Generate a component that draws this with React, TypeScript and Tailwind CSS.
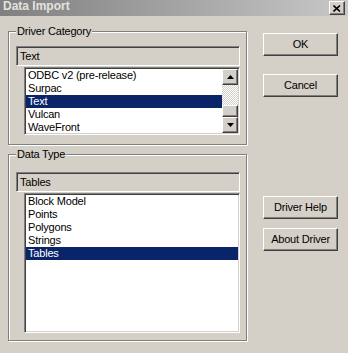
const raised =
  "border border-t-white border-l-white border-b-[#404040] border-r-[#404040] shadow-[inset_-1px_-1px_0_#808080]"
const sunken =
  "border border-t-[#808080] border-l-[#808080] border-b-white border-r-white shadow-[inset_1px_1px_0_#404040,inset_-1px_-1px_0_#d4d0c8]"

function Group({ label, children, className }: { label: string; children: React.ReactNode; className: string }) {
  return (
    <div className={`relative border border-[#808080] shadow-[inset_1px_1px_0_#fff,1px_1px_0_#fff] pl-[7px] ${className}`}>
      <span className="absolute left-[7px] -top-[8px] bg-[#d4d0c8] px-[1px] leading-[14px]">{label}</span>
      {children}
    </div>
  )
}

function ReadOnly({ value }: { value: string }) {
  return (
    <div className={`w-[224px] h-[20px] bg-[#d4d0c8] pl-[3px] pt-[3px] leading-[13px] ${sunken}`}>{value}</div>
  )
}

function Arrow({ up }: { up?: boolean }) {
  return (
    <svg width="7" height="4" viewBox="0 0 7 4">
      <path d={up ? "M3.5 0 L7 4 L0 4 Z" : "M0 0 L7 0 L3.5 4 Z"} fill="#000" />
    </svg>
  )
}

function ListBox({ items, selected, height, scroll }: { items: string[]; selected: string; height: string; scroll?: boolean }) {
  return (
    <div className={`ml-[8px] mt-[1px] w-[216px] ${height} bg-white flex ${sunken} p-[1px]`}>
      <div className="flex-1 flex flex-col">
        {items.map(item => (
          <div key={item}
            className={`h-[13px] leading-[13px] pl-[2px] whitespace-nowrap ${item === selected ? "bg-[#0a246a] text-white" : "text-black"}`}>
            {item}
          </div>
        ))}
      </div>
      {scroll && (
        <div className="w-[16px] flex flex-col">
          <div className={`h-[16px] flex items-center justify-center bg-[#d4d0c8] ${raised}`}><Arrow up /></div>
          <div className="h-[20px] bg-[repeating-conic-gradient(#fff_0_25%,#d4d0c8_0_50%)] bg-[length:2px_2px]" />
          <div className={`h-[12px] bg-[#d4d0c8] ${raised}`} />
          <div className={`h-[16px] flex items-center justify-center bg-[#d4d0c8] ${raised}`}><Arrow /></div>
        </div>
      )}
    </div>
  )
}

function Button({ label, className }: { label: string; className: string }) {
  return (
    <div className={`w-[75px] h-[23px] flex items-center justify-center bg-[#d4d0c8] ${raised} ${className}`}>
      {label}
    </div>
  )
}

export default function App() {
  return (
    <div className="w-[348px] h-[353px] bg-[#d4d0c8] flex flex-col text-[11px] text-black font-['Liberation_Sans',Arial,sans-serif] tracking-[-0.2px] overflow-hidden">
      <div className="h-[16px] bg-gradient-to-r from-[#808080] to-[#c8c8c8] flex items-start justify-between pl-[3px] pr-[3px]">
        <span className="text-[12px] font-bold text-[#e4e2dc] leading-[13px] tracking-normal">Data Import</span>
        <div className={`w-[16px] h-[14px] mt-[1px] bg-[#d4d0c8] flex items-center justify-center ${raised}`}>
          <svg width="8" height="7" viewBox="0 0 8 7">
            <path d="M0.5 0.5 L7 6.5 M7 0.5 L0.5 6.5" stroke="#000" strokeWidth="1.6" />
          </svg>
        </div>
      </div>

      <div className="flex pl-[8px]">
        <div className="w-[239px] flex flex-col">
          <Group label="Driver Category" className="mt-[15px] h-[114px] pt-[14px]">
            <ReadOnly value="Text" />
            <ListBox
              items={["ODBC v2 (pre-release)", "Surpac", "Text", "Vulcan", "WaveFront"]}
              selected="Text"
              height="h-[68px]"
              scroll
            />
          </Group>
          <Group label="Data Type" className="mt-[9px] h-[187px] pt-[17px]">
            <ReadOnly value="Tables" />
            <ListBox
              items={["Block Model", "Points", "Polygons", "Strings", "Tables"]}
              selected="Tables"
              height="h-[140px]"
            />
          </Group>
        </div>

        <div className="ml-[16px] flex flex-col">
          <Button label="OK" className="mt-[17px]" />
          <Button label="Cancel" className="mt-[18px]" />
          <Button label="Driver Help" className="mt-[99px]" />
          <Button label="About Driver" className="mt-[9px]" />
        </div>
      </div>
    </div>
  )
}
